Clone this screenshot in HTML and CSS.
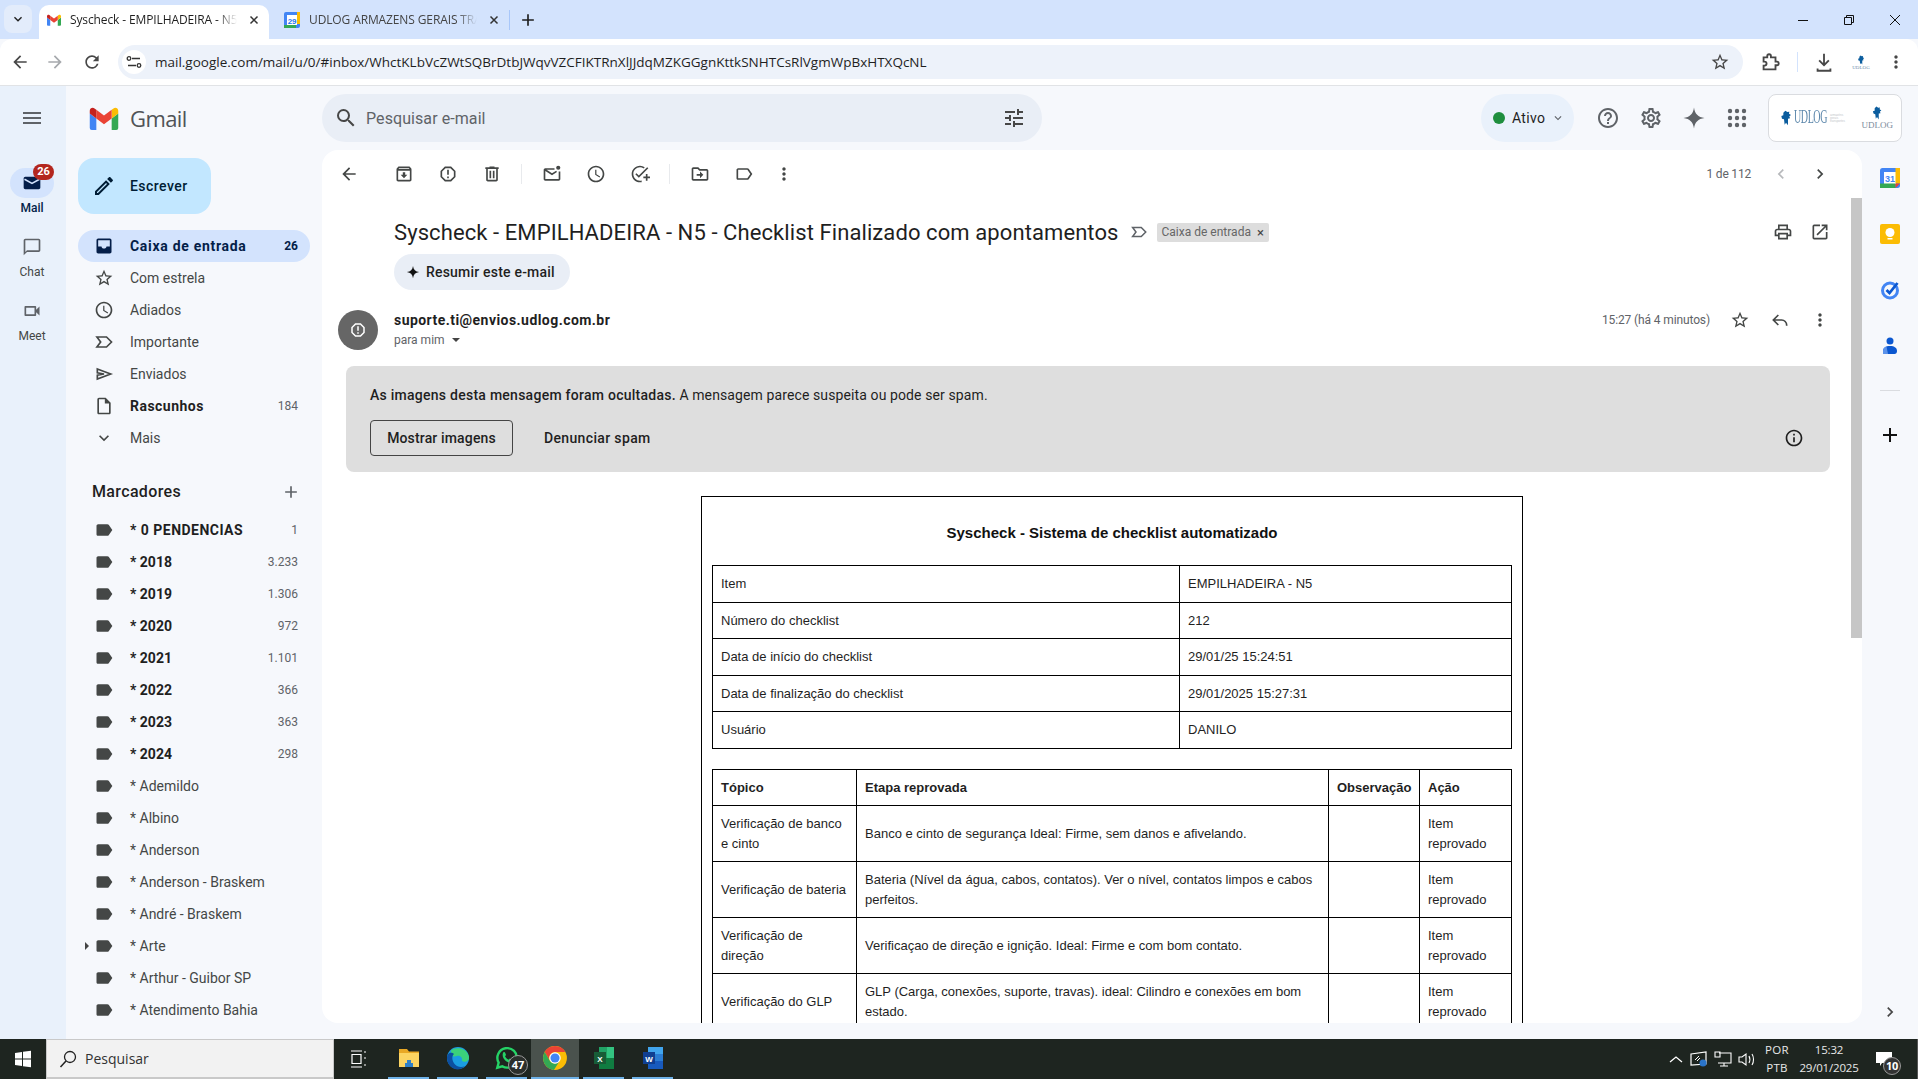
FILE: index.html
```html
<!DOCTYPE html>
<html lang="pt-BR">
<head>
<meta charset="utf-8">
<title>Syscheck - EMPILHADEIRA - N5</title>
<link rel="stylesheet" href="styles.css">
</head>
<body>
<svg class="defs" xmlns="http://www.w3.org/2000/svg">
<symbol id="back" viewBox="0 0 24 24"><path d="M20 11H7.83l5.59-5.59L12 4l-8 8 8 8 1.41-1.41L7.83 13H20v-2z"/></symbol>
<symbol id="forward" viewBox="0 0 24 24"><path d="M12 4l-1.41 1.41L16.17 11H4v2h12.17l-5.58 5.59L12 20l8-8z"/></symbol>
<symbol id="refresh" viewBox="0 0 24 24"><path d="M17.65 6.35A7.958 7.958 0 0 0 12 4c-4.42 0-7.99 3.58-7.99 8s3.57 8 7.99 8c3.73 0 6.84-2.55 7.73-6h-2.08A5.99 5.99 0 0 1 12 18c-3.31 0-6-2.69-6-6s2.69-6 6-6c1.66 0 3.14.69 4.22 1.78L13 11h7V4l-2.35 2.35z"/></symbol>
<symbol id="star" viewBox="0 0 24 24"><path d="M22 9.24l-7.19-.62L12 2 9.19 8.63 2 9.24l5.46 4.73L5.82 21 12 17.27 18.18 21l-1.63-7.03L22 9.24zM12 15.4l-3.76 2.27 1-4.28-3.32-2.88 4.38-.38L12 6.1l1.71 4.04 4.38.38-3.32 2.88 1 4.28L12 15.4z"/></symbol>
<symbol id="search" viewBox="0 0 24 24"><path d="M15.5 14h-.79l-.28-.27A6.471 6.471 0 0 0 16 9.5 6.5 6.5 0 1 0 9.5 16c1.61 0 3.09-.59 4.23-1.57l.27.28v.79l5 4.99L20.49 19l-4.99-5zm-6 0C7.01 14 5 11.99 5 9.5S7.01 5 9.5 5 14 7.01 14 9.5 11.99 14 9.5 14z"/></symbol>
<symbol id="menu" viewBox="0 0 24 24"><path d="M3 18h18v-2H3v2zm0-5h18v-2H3v2zm0-7v2h18V6H3z"/></symbol>
<symbol id="tune" viewBox="0 0 24 24"><path d="M3 17v2h6v-2H3zM3 5v2h10V5H3zm10 16v-2h8v-2h-8v-2h-2v6h2zM7 9v2H3v2h4v2h2V9H7zm14 4v-2H11v2h10zm-6-4h2V7h4V5h-4V3h-2v6z"/></symbol>
<symbol id="help" viewBox="0 0 24 24"><path d="M11 18h2v-2h-2v2zm1-16C6.48 2 2 6.48 2 12s4.48 10 10 10 10-4.48 10-10S17.52 2 12 2zm0 18c-4.41 0-8-3.59-8-8s3.59-8 8-8 8 3.59 8 8-3.59 8-8 8zm0-14c-2.21 0-4 1.79-4 4h2c0-1.1.9-2 2-2s2 .9 2 2c0 2-3 1.75-3 5h2c0-2.25 3-2.5 3-5 0-2.21-1.79-4-4-4z"/></symbol>
<symbol id="gear" viewBox="0 0 24 24"><path d="M19.43 12.98c.04-.32.07-.64.07-.98 0-.34-.03-.66-.07-.98l2.11-1.65c.19-.15.24-.42.12-.64l-2-3.46c-.09-.16-.26-.25-.44-.25-.06 0-.12.01-.17.03l-2.49 1c-.52-.4-1.08-.73-1.69-.98l-.38-2.65C14.46 2.18 14.25 2 14 2h-4c-.25 0-.46.18-.49.42l-.38 2.65c-.61.25-1.17.59-1.69.98l-2.49-1c-.06-.02-.12-.03-.18-.03-.17 0-.34.09-.43.25l-2 3.46c-.13.22-.07.49.12.64l2.11 1.65c-.04.32-.07.65-.07.98 0 .33.03.66.07.98l-2.11 1.65c-.19.15-.24.42-.12.64l2 3.46c.09.16.26.25.44.25.06 0 .12-.01.17-.03l2.49-1c.52.4 1.08.73 1.69.98l.38 2.65c.03.24.24.42.49.42h4c.25 0 .46-.18.49-.42l.38-2.65c.61-.25 1.17-.59 1.69-.98l2.49 1c.06.02.12.03.18.03.17 0 .34-.09.43-.25l2-3.46c.12-.22.07-.49-.12-.64l-2.11-1.65zm-1.98-1.71c.04.31.05.52.05.73 0 .21-.02.43-.05.73l-.14 1.13.89.7 1.08.84-.7 1.21-1.27-.51-1.04-.42-.9.68c-.43.32-.84.56-1.25.73l-1.06.43-.16 1.13-.2 1.35h-1.4l-.19-1.35-.16-1.13-1.06-.43c-.43-.18-.83-.41-1.23-.71l-.91-.7-1.06.43-1.27.51-.7-1.21 1.08-.84.89-.7-.14-1.13c-.03-.31-.05-.54-.05-.74s.02-.43.05-.73l.14-1.13-.89-.7-1.08-.84.7-1.21 1.27.51 1.04.42.9-.68c.43-.32.84-.56 1.25-.73l1.06-.43.16-1.13.2-1.35h1.39l.19 1.35.16 1.13 1.06.43c.43.18.83.41 1.23.71l.91.7 1.06-.43 1.27-.51.7 1.21-1.07.85-.89.7.14 1.13zM12 8c-2.21 0-4 1.79-4 4s1.79 4 4 4 4-1.79 4-4-1.79-4-4-4zm0 6c-1.1 0-2-.9-2-2s.9-2 2-2 2 .9 2 2-.9 2-2 2z"/></symbol>
<symbol id="spark" viewBox="0 0 24 24"><path d="M12 1.5C12.8 7.8 16.2 11.2 22.5 12 16.2 12.8 12.8 16.2 12 22.5 11.2 16.2 7.8 12.8 1.5 12 7.8 11.2 11.2 7.8 12 1.5z"/></symbol>
<symbol id="apps" viewBox="0 0 24 24"><circle cx="5" cy="5" r="2.2"/><circle cx="12" cy="5" r="2.2"/><circle cx="19" cy="5" r="2.2"/><circle cx="5" cy="12" r="2.2"/><circle cx="12" cy="12" r="2.2"/><circle cx="19" cy="12" r="2.2"/><circle cx="5" cy="19" r="2.2"/><circle cx="12" cy="19" r="2.2"/><circle cx="19" cy="19" r="2.2"/></symbol>
<symbol id="archive" viewBox="0 0 24 24"><path d="M20.54 5.23l-1.39-1.68C18.88 3.21 18.47 3 18 3H6c-.47 0-.88.21-1.16.55L3.46 5.23C3.17 5.57 3 6.02 3 6.5V19c0 1.1.9 2 2 2h14c1.1 0 2-.9 2-2V6.5c0-.48-.17-.93-.46-1.27zM6.24 5h11.52l.81.97H5.44l.8-.97zM5 19V8h14v11H5zm8.45-9h-2.9v3H8l4 4 4-4h-2.55z"/></symbol>
<symbol id="report" viewBox="0 0 24 24"><path d="M15.73 3H8.27L3 8.27v7.46L8.27 21h7.46L21 15.73V8.27L15.73 3zM19 14.9L14.9 19H9.1L5 14.9V9.1L9.1 5h5.8L19 9.1v5.8zM11 7h2v6h-2zm0 8h2v2h-2z"/></symbol>
<symbol id="trash" viewBox="0 0 24 24"><path d="M15 4V3H9v1H4v2h1v13c0 1.1.9 2 2 2h10c1.1 0 2-.9 2-2V6h1V4h-5zm2 15H7V6h10v13zM9 8h2v9H9zm4 0h2v9h-2z"/></symbol>
<symbol id="unread" viewBox="0 0 24 24"><path d="M15 5H4c-1.1 0-2 .9-2 2v11c0 1.1.9 2 2 2h16c1.1 0 2-.9 2-2V9h-2v9H4V8.500l8 5 6-3.800-1-1.700-5 3.100L5.500 7H15z"/><circle cx="19.500" cy="4.500" r="2.500"/></symbol>
<symbol id="clock" viewBox="0 0 24 24"><path d="M11.99 2C6.47 2 2 6.48 2 12s4.47 10 9.99 10C17.52 22 22 17.52 22 12S17.52 2 11.99 2zM12 20c-4.42 0-8-3.58-8-8s3.58-8 8-8 8 3.58 8 8-3.58 8-8 8zm.5-13H11v6l5.25 3.15.75-1.23-4.5-2.67z"/></symbol>
<symbol id="addtask" viewBox="0 0 24 24"><path d="M22 5.18L10.59 16.6l-4.24-4.24 1.41-1.41 2.83 2.83 10-10L22 5.18zm-10 14.8c-4.42 0-8-3.56-8-7.98s3.58-8 8-8c1.58 0 3.04.46 4.28 1.25l1.44-1.44A9.9 9.9 0 0 0 12 2C6.48 2 2 6.48 2 12s4.48 10 10 10c.7 0 1.3-.05 2-.2v-2.05c-.65.15-1.3.23-2 .23zM19 15h-3v2h3v3h2v-3h3v-2h-3v-3h-2v3z"/></symbol>
<symbol id="move" viewBox="0 0 24 24"><path d="M20 6h-8l-2-2H4c-1.1 0-1.99.9-1.99 2L2 18c0 1.1.9 2 2 2h16c1.1 0 2-.9 2-2V8c0-1.1-.9-2-2-2zm0 12H4V6h5.17l2 2H20v10zm-8-4H8v-2h4V9l4 4-4 4v-3z"/></symbol>
<symbol id="label" viewBox="0 0 24 24"><path d="M17.63 5.84C17.27 5.33 16.67 5 16 5L5 5.01C3.9 5.01 3 5.9 3 7v10c0 1.1.9 1.99 2 1.99L16 19c.67 0 1.27-.33 1.63-.84L22 12l-4.37-6.16zM16 17H5V7h11l3.55 5L16 17z"/></symbol>
<symbol id="labelfill" viewBox="0 0 24 24"><path d="M17.63 5.84C17.27 5.33 16.67 5 16 5L5 5.01C3.9 5.01 3 5.9 3 7v10c0 1.1.9 1.99 2 1.99L16 19c.67 0 1.27-.33 1.63-.84L22 12l-4.37-6.16z"/></symbol>
<symbol id="more" viewBox="0 0 24 24"><path d="M12 8c1.1 0 2-.9 2-2s-.9-2-2-2-2 .9-2 2 .9 2 2 2zm0 2c-1.1 0-2 .9-2 2s.9 2 2 2 2-.9 2-2-.9-2-2-2zm0 6c-1.1 0-2 .9-2 2s.9 2 2 2 2-.9 2-2-.9-2-2-2z"/></symbol>
<symbol id="chevl" viewBox="0 0 24 24"><path d="M15.41 7.41L14 6l-6 6 6 6 1.41-1.41L10.83 12z"/></symbol>
<symbol id="chevr" viewBox="0 0 24 24"><path d="M10 6L8.59 7.41 13.17 12l-4.58 4.59L10 18l6-6z"/></symbol>
<symbol id="expand" viewBox="0 0 24 24"><path d="M16.59 8.59L12 13.17 7.41 8.59 6 10l6 6 6-6z"/></symbol>
<symbol id="print" viewBox="0 0 24 24"><path d="M19 8h-1V3H6v5H5c-1.66 0-3 1.34-3 3v6h4v4h12v-4h4v-6c0-1.66-1.34-3-3-3zM8 5h8v3H8V5zm8 12v2H8v-4h8v2zm2-2v-2H6v2H4v-4c0-.55.45-1 1-1h14c.55 0 1 .45 1 1v4h-2z"/></symbol>
<symbol id="open" viewBox="0 0 24 24"><path d="M19 19H5V5h7V3H5a2 2 0 0 0-2 2v14a2 2 0 0 0 2 2h14c1.1 0 2-.9 2-2v-7h-2v7zM14 3v2h3.59l-9.83 9.83 1.41 1.41L19 6.41V10h2V3h-7z"/></symbol>
<symbol id="reply" viewBox="0 0 24 24"><path fill="none" stroke="currentColor" stroke-width="2" d="M10 6l-6 6 6 6M4 12h10a6 6 0 0 1 6 6v1"/></symbol>
<symbol id="info" viewBox="0 0 24 24"><path d="M11 7h2v2h-2zm0 4h2v6h-2zm1-9C6.48 2 2 6.48 2 12s4.48 10 10 10 10-4.48 10-10S17.52 2 12 2zm0 18c-4.41 0-8-3.59-8-8s3.59-8 8-8 8 3.59 8 8-3.59 8-8 8z"/></symbol>
<symbol id="inbox" viewBox="0 0 24 24"><path fill-rule="evenodd" d="M19 3H5c-1.1 0-2 .9-2 2v14c0 1.1.9 2 2 2h14c1.1 0 2-.9 2-2V5c0-1.1-.9-2-2-2zM12 15c-1.66 0-3-1-3-2.5H5V5h14v7.5h-4c0 1.5-1.34 2.5-3 2.5z"/></symbol>
<symbol id="important" viewBox="0 0 24 24"><path fill="none" stroke="currentColor" stroke-width="2" d="M3.5 6l4.5 6-4.500 6H15l6-6-6-6z"/></symbol>
<symbol id="send" viewBox="0 0 24 24"><path fill="none" stroke="currentColor" stroke-width="2" d="M4 6l16 6-16 6v-4.500l8-1.500-8-1.500z"/></symbol>
<symbol id="draft" viewBox="0 0 24 24"><path d="M14 2H6a2 2 0 0 0-2 2v16c0 1.100.9 2 2 2h12c1.100 0 2-.9 2-2V8l-6-6zm4 18H6V4h7v5h5v11z"/></symbol>
<symbol id="pencil" viewBox="0 0 24 24"><path d="M3 17.250V21h3.750L17.810 9.940l-3.750-3.750L3 17.250zM5.920 19H5v-.92l9.060-9.060.92.92L5.920 19zM20.710 5.630l-2.340-2.340c-.39-.39-1.020-.39-1.410 0l-1.830 1.830 3.750 3.750 1.830-1.830c.39-.39.39-1.020 0-1.410z"/></symbol>
<symbol id="chat" viewBox="0 0 24 24"><path d="M20 2H4c-1.100 0-2 .9-2 2v18l4-4h14c1.100 0 2-.9 2-2V4c0-1.100-.9-2-2-2zm0 14H6l-2 2V4h16v12z"/></symbol>
<symbol id="meet" viewBox="0 0 24 24"><path d="M15 8v8H5V8h10m1-2H4c-.55 0-1 .45-1 1v10c0 .55.45 1 1 1h12c.55 0 1-.45 1-1v-3.500l4 4v-11l-4 4V7c0-.55-.45-1-1-1z"/></symbol>
<symbol id="plus" viewBox="0 0 24 24"><path d="M19 13h-6v6h-2v-6H5v-2h6V5h2v6h6v2z"/></symbol>
<symbol id="gmail" viewBox="0 0 52 42"><path fill="#4285f4" d="M3.600 42H12V21L0 12v26.400A3.600 3.600 0 0 0 3.600 42z"/><path fill="#34a853" d="M40 42h8.400a3.600 3.600 0 0 0 3.600-3.600V12L40 21z"/><path fill="#fbbc04" d="M40 5v16l12-9V7c0-4.500-5.100-7-8.700-4.300z"/><path fill="#ea4335" d="M12 21V5l14 10.500L40 5v16L26 31.500z"/><path fill="#c5221f" d="M0 7v5l12 9V5L8.700 2.700C5.100 0 0 2.500 0 7z"/></symbol>
<symbol id="lion" viewBox="0 0 24 24"><path fill="#0b5d9e" d="M11 1l3 2 3-.5-.5 3 3 2-2.500 2 1 3-3 .5L15 23l-3-4-2 3-1-8-3-1-1-4 3-1V4z"/></symbol>
</svg>

<header class="tabstrip">
  <button class="tabdrop"><svg class="i i16 ink"><use href="#expand"/></svg></button>
  <div class="tab active">
    <svg class="i i14"><use href="#gmail"/></svg>
    <span class="tabtext">Syscheck - EMPILHADEIRA - N5</span>
    <svg class="i i16 ink"><path d="M4.500 4.500l7 7m0-7l-7 7" stroke="#333" stroke-width="1.500"/></svg>
  </div>
  <div class="tab">
    <svg class="cal-fav" viewBox="0 0 16 16"><rect width="16" height="16" rx="2" fill="#4285f4"/><rect x="3" y="3" width="10" height="10" fill="#fff"/><rect y="13" width="12" height="3" fill="#34a853"/><rect x="13" width="3" height="12" fill="#fbbc04"/><text x="8" y="11.500" class="cal-num">29</text></svg>
    <span class="tabtext tabtext-2">UDLOG ARMAZENS GERAIS TRA</span>
    <svg class="i i16 ink"><path d="M4.500 4.500l7 7m0-7l-7 7" stroke="#333" stroke-width="1.500"/></svg>
  </div>
  <span class="tabsep"></span>
  <svg class="i i20 ink newtab"><use href="#plus"/></svg>
  <div class="winctl">
    <svg class="i i16"><path d="M3 8.500h10" stroke="#111" stroke-width="1"/></svg>
    <svg class="i i16"><path d="M3.500 5.500h7v7h-7zM5.500 5.500v-2h7v7h-2" fill="none" stroke="#111" stroke-width="1"/></svg>
    <svg class="i i16"><path d="M3 3l10 10m0-10L3 13" stroke="#111" stroke-width="1"/></svg>
  </div>
</header>

<nav class="toolbar">
  <svg class="i i20 dark navb"><use href="#back"/></svg>
  <svg class="i i20 faint navb"><use href="#forward"/></svg>
  <svg class="i i20 dark navb"><use href="#refresh"/></svg>
  <div class="omnibox">
    <span class="siteinfo"><svg class="i i16" viewBox="0 0 16 16"><path d="M6 4.500h8M2 11.500h8" stroke="#333" stroke-width="1.300" fill="none"/><circle cx="3" cy="4.500" r="1.800" fill="none" stroke="#333" stroke-width="1.300"/><circle cx="13" cy="11.500" r="1.800" fill="none" stroke="#333" stroke-width="1.300"/></svg></span>
    <span class="url">mail.google.com/mail/u/0/#inbox/WhctKLbVcZWtSQBrDtbJWqvVZCFIKTRnXlJJdqMZKGGgnKttkSNHTCsRlVgmWpBxHTXQcNL</span>
    <svg class="i i20 dark omnistar"><use href="#star"/></svg>
  </div>
  <svg class="tb-ext dark" viewBox="0 0 24 24"><path fill="none" stroke="currentColor" stroke-width="2" d="M5 7h4V5.500a2 2 0 0 1 4 0V7h5v4.500h1.500a2 2 0 0 1 0 4H18V20H5v-4h1a2 2 0 0 0 0-4.500H5z"/></svg>
  <span class="tb-sep"></span>
  <svg class="i i22 dark tb-dl" viewBox="0 0 24 24"><path fill="currentColor" d="M11 3h2v10.200l3.600-3.600L18 11l-6 6-6-6 1.400-1.400L11 13.200zM4 19h2v1.500h12V19h2v3.500H4z"/></svg>
  <span class="tb-avatar"><svg class="i i10"><use href="#lion"/></svg><span class="tiny-log">UDLOG</span></span>
  <svg class="i i20 dark tb-more"><use href="#more"/></svg>
</nav>

<div class="app">
  <aside class="rail">
    <div class="hamb"><svg class="i i24 gray"><use href="#menu"/></svg></div>
    <div class="railitem">
      <span class="pill sel"><svg class="i i20 navy" viewBox="0 0 24 24"><path d="M4 4.500h16c1.100 0 2 .9 2 2v11c0 1.100-.9 2-2 2H4c-1.100 0-2-.9-2-2v-11c0-1.100.9-2 2-2z"/><path d="M3 7.500l9 5 9-5" fill="none" stroke="#d3e3fd" stroke-width="1.800"/></svg><b class="badge">26</b></span>
      <span class="raillabel strong">Mail</span>
    </div>
    <div class="railitem">
      <span class="pill"><svg class="i i20 gray"><use href="#chat"/></svg></span>
      <span class="raillabel">Chat</span>
    </div>
    <div class="railitem">
      <span class="pill"><svg class="i i20 gray"><use href="#meet"/></svg></span>
      <span class="raillabel">Meet</span>
    </div>
  </aside>

  <div class="brand">
    <svg class="gm-logo"><use href="#gmail"/></svg>
    <span class="gm-word">Gmail</span>
  </div>

  <div class="topbar">
    <div class="searchbox">
      <svg class="i i24 dark"><use href="#search"/></svg>
      <span class="searchtext">Pesquisar e-mail</span>
      <svg class="i i24 dark tune"><use href="#tune"/></svg>
    </div>
    <div class="status"><span class="dot"></span>Ativo<svg class="i i14 gray"><use href="#expand"/></svg></div>
    <svg class="i i24 gray topic t-help"><use href="#help"/></svg>
    <svg class="i i24 gray topic"><use href="#gear"/></svg>
    <svg class="i i24 gray topic"><use href="#spark"/></svg>
    <svg class="i i24 gray topic"><use href="#apps"/></svg>
    <div class="orgbox">
      <svg class="org-l"><use href="#lion"/></svg><span class="org-t">UDLOG</span><span class="org-f">armazéns gerais transportes</span>
      <span class="org-r"><svg class="i i14"><use href="#lion"/></svg><span class="org-t2">UDLOG</span></span>
    </div>
  </div>

  <aside class="side">
    <button class="compose"><svg class="i i24 navyk"><use href="#pencil"/></svg><span>Escrever</span></button>
    <ul class="nav">
      <li class="row current"><svg class="i i20"><use href="#inbox"/></svg><span class="nm">Caixa de entrada</span><span class="ct">26</span></li>
      <li class="row"><svg class="i i20"><use href="#star"/></svg><span class="nm">Com estrela</span></li>
      <li class="row"><svg class="i i20"><use href="#clock"/></svg><span class="nm">Adiados</span></li>
      <li class="row"><svg class="i i20"><use href="#important"/></svg><span class="nm">Importante</span></li>
      <li class="row"><svg class="i i20"><use href="#send"/></svg><span class="nm">Enviados</span></li>
      <li class="row bold"><svg class="i i20"><use href="#draft"/></svg><span class="nm">Rascunhos</span><span class="ct">184</span></li>
      <li class="row"><svg class="i i20"><use href="#expand"/></svg><span class="nm">Mais</span></li>
    </ul>
    <div class="markhead"><span>Marcadores</span><svg class="i i20 gray"><use href="#plus"/></svg></div>
    <ul class="nav labels">
      <li class="row bold"><svg class="i i20"><use href="#labelfill"/></svg><span class="nm">* 0 PENDENCIAS</span><span class="ct">1</span></li>
      <li class="row bold yr"><svg class="i i20"><use href="#labelfill"/></svg><span class="nm">* 2018</span><span class="ct">3.233</span></li>
      <li class="row bold yr"><svg class="i i20"><use href="#labelfill"/></svg><span class="nm">* 2019</span><span class="ct">1.306</span></li>
      <li class="row bold yr"><svg class="i i20"><use href="#labelfill"/></svg><span class="nm">* 2020</span><span class="ct">972</span></li>
      <li class="row bold yr"><svg class="i i20"><use href="#labelfill"/></svg><span class="nm">* 2021</span><span class="ct">1.101</span></li>
      <li class="row bold yr"><svg class="i i20"><use href="#labelfill"/></svg><span class="nm">* 2022</span><span class="ct">366</span></li>
      <li class="row bold yr"><svg class="i i20"><use href="#labelfill"/></svg><span class="nm">* 2023</span><span class="ct">363</span></li>
      <li class="row bold yr"><svg class="i i20"><use href="#labelfill"/></svg><span class="nm">* 2024</span><span class="ct">298</span></li>
      <li class="row"><svg class="i i20"><use href="#labelfill"/></svg><span class="nm">* Ademildo</span></li>
      <li class="row"><svg class="i i20"><use href="#labelfill"/></svg><span class="nm">* Albino</span></li>
      <li class="row"><svg class="i i20"><use href="#labelfill"/></svg><span class="nm">* Anderson</span></li>
      <li class="row"><svg class="i i20"><use href="#labelfill"/></svg><span class="nm">* Anderson - Braskem</span></li>
      <li class="row"><svg class="i i20"><use href="#labelfill"/></svg><span class="nm">* André - Braskem</span></li>
      <li class="row caret"><svg class="i i20"><use href="#labelfill"/></svg><span class="nm">* Arte</span></li>
      <li class="row"><svg class="i i20"><use href="#labelfill"/></svg><span class="nm">* Arthur - Guibor SP</span></li>
      <li class="row"><svg class="i i20"><use href="#labelfill"/></svg><span class="nm">* Atendimento Bahia</span></li>
    </ul>
  </aside>

  <main class="card">
    <div class="actions">
      <button class="ab"><svg class="i i20"><use href="#back"/></svg></button>
      <button class="ab first"><svg class="i i20"><use href="#archive"/></svg></button>
      <button class="ab"><svg class="i i20"><use href="#report"/></svg></button>
      <button class="ab"><svg class="i i20"><use href="#trash"/></svg></button>
      <span class="vsep"></span>
      <button class="ab"><svg class="i i20"><use href="#unread"/></svg></button>
      <button class="ab"><svg class="i i20"><use href="#clock"/></svg></button>
      <button class="ab"><svg class="i i20"><use href="#addtask"/></svg></button>
      <span class="vsep"></span>
      <button class="ab"><svg class="i i20"><use href="#move"/></svg></button>
      <button class="ab"><svg class="i i20"><use href="#label"/></svg></button>
      <button class="ab last"><svg class="i i20"><use href="#more"/></svg></button>
      <span class="pager">1 de 112</span>
      <button class="pg off"><svg class="i i20"><use href="#chevl"/></svg></button>
      <button class="pg"><svg class="i i20"><use href="#chevr"/></svg></button>
    </div>

    <div class="subjectrow">
      <h1 class="subject">Syscheck - EMPILHADEIRA - N5 - Checklist Finalizado com apontamentos</h1>
      <svg class="i i18 marker"><use href="#important"/></svg>
      <span class="chip">Caixa de entrada<span class="chipx">×</span></span>
      <svg class="i i20 subj-ic first"><use href="#print"/></svg>
      <svg class="i i20 subj-ic"><use href="#open"/></svg>
    </div>

    <button class="summ"><svg class="i i14 blk"><use href="#spark"/></svg>Resumir este e-mail</button>

    <div class="msghead">
      <span class="avatar"><svg class="i i18 wht"><use href="#report"/></svg></span>
      <div class="who">
        <div class="sender">suporte.ti@envios.udlog.com.br</div>
        <div class="tome">para mim <i class="tri"></i></div>
      </div>
      <span class="when">15:27 (há 4 minutos)</span>
      <button class="mb"><svg class="i i20"><use href="#star"/></svg></button>
      <button class="mb"><svg class="i i20"><use href="#reply"/></svg></button>
      <button class="mb"><svg class="i i20"><use href="#more"/></svg></button>
    </div>

    <section class="warn">
      <p class="warntext"><span class="w5">As imagens desta mensagem foram ocultadas.</span> <span class="w4">A mensagem parece suspeita ou pode ser spam.</span></p>
      <div class="warnbtns">
        <button class="bshow">Mostrar imagens</button>
        <button class="bspam">Denunciar spam</button>
        <svg class="i i20 warninfo"><use href="#info"/></svg>
      </div>
    </section>

    <article class="mailbox">
      <h2 class="mailtitle">Syscheck - Sistema de checklist automatizado</h2>
      <table class="t t1">
        <colgroup><col class="c1a"><col></colgroup>
        <tr><td>Item</td><td>EMPILHADEIRA - N5</td></tr>
        <tr><td>Número do checklist</td><td>212</td></tr>
        <tr><td>Data de início do checklist</td><td>29/01/25 15:24:51</td></tr>
        <tr><td>Data de finalização do checklist</td><td>29/01/2025 15:27:31</td></tr>
        <tr><td>Usuário</td><td>DANILO</td></tr>
      </table>
      <table class="t t2">
        <colgroup><col class="c2a"><col><col class="c2c"><col class="c2d"></colgroup>
        <tr><th>Tópico</th><th>Etapa reprovada</th><th>Observação</th><th>Ação</th></tr>
        <tr><td>Verificação de banco e cinto</td><td>Banco e cinto de segurança Ideal: Firme, sem danos e afivelando.</td><td></td><td>Item reprovado</td></tr>
        <tr><td>Verificação de bateria</td><td>Bateria (Nível da água, cabos, contatos). Ver o nível, contatos limpos e cabos perfeitos.</td><td></td><td>Item reprovado</td></tr>
        <tr><td>Verificação de direção</td><td>Verificaçao de direção e ignição. Ideal: Firme e com bom contato.</td><td></td><td>Item reprovado</td></tr>
        <tr><td>Verificação do GLP</td><td>GLP (Carga, conexões, suporte, travas). ideal: Cilindro e conexões em bom estado.</td><td></td><td>Item reprovado</td></tr>
      </table>
    </article>
    <span class="thumb"></span>
  </main>

  <aside class="addons">
    <svg class="ad" viewBox="0 0 20 20"><rect width="20" height="20" rx="2.500" fill="#4285f4"/><rect x="4" y="4" width="12" height="12" fill="#fff"/><rect y="15.500" width="15.500" height="4.500" fill="#34a853"/><rect x="15.500" y="0" width="4.500" height="15.500" fill="#fbbc04"/><path d="M15.500 15.500H20L15.500 20z" fill="#ea4335"/><text x="10" y="14" class="cal-num2">31</text></svg>
    <svg class="ad" viewBox="0 0 20 20"><rect width="20" height="20" rx="2" fill="#fbbc04"/><circle cx="10" cy="8.500" r="4.500" fill="#fff"/><rect x="7.500" y="14" width="5" height="1.500" fill="#fff"/></svg>
    <svg class="ad" viewBox="0 0 20 20"><circle cx="10" cy="10.500" r="7.500" fill="none" stroke="#4285f4" stroke-width="3"/><path d="M6.500 10l3 3L17.500 3" fill="none" stroke="#0b57d0" stroke-width="2.800"/></svg>
    <svg class="ad" viewBox="0 0 20 20"><circle cx="10" cy="5" r="3.500" fill="#0b57d0"/><path d="M3 18v-3c0-3 2.500-5 7-5s7 2 7 5c0 2-1 3-2.500 3z" fill="#0b57d0"/><path d="M3 18v-3c0-2.500 1.500-4 3.500-4.500L8 18z" fill="#5b92ea"/></svg>
    <span class="adsep"></span>
    <svg class="i i24 blk adplus"><use href="#plus"/></svg>
    <svg class="i i20 dark adchev"><use href="#chevr"/></svg>
  </aside>
</div>

<footer class="taskbar">
  <span class="start"><svg class="i i18" viewBox="0 0 18 18"><path fill="#fff" d="M1 3l7-1v6.500H1zM9 1.800L17 .8v7.700H9zM1 9.500h7V16l-7-1zM9 9.500h8v7.700l-8-1z"/></svg></span>
  <div class="tasksearch"><svg class="i i20 sblk" viewBox="0 0 20 20"><circle cx="12" cy="8" r="5.500" fill="none" stroke="#222" stroke-width="1.300"/><path d="M8 12l-5.500 6" stroke="#222" stroke-width="1.500"/></svg><span>Pesquisar</span></div>
  <span class="taskview"><svg class="i i18" viewBox="0 0 18 18"><path fill="none" stroke="#fff" stroke-width="1.200" d="M2 1h11M2 17h11M3 4.500h9v9H3zM15 2h2M15 8h2M15 15h2"/></svg></span>
  <div class="app-ic"><svg class="i i24" viewBox="0 0 24 24"><path fill="#e9a825" d="M2 3h8l2 2.500h10V8H2z"/><path fill="#fcd462" d="M2 7h20v14H2z"/><path fill="#2f80c9" d="M8 17h8v4H8zM10 14h4v3h-4z"/></svg></div>
  <div class="app-ic"><svg class="i i24" viewBox="0 0 24 24"><circle cx="12" cy="12" r="11" fill="#1b9de2"/><path fill="#3bd17b" d="M5 4.500C9 .5 21 1 23 11c.5 4-4 6-7 4 1-3-2-6-5-5-3.500 1-6 1-6-5.500z"/><path fill="#0c4fa0" d="M1 12C1 6 6 6 8 8 5 10 6 17 11 20c3 1.500 6 1 8 0-3 3-7 4-10 3C4 21.500 1 17 1 12z"/></svg></div>
  <div class="app-ic wa"><svg class="i i26" viewBox="0 0 24 24"><path fill="none" stroke="#25d366" stroke-width="2.200" d="M3 21l1.300-4.700A9 9 0 1 1 7.700 19.700z"/><path fill="#25d366" d="M8.500 7c1-.8 1.500-.5 2 .7l.6 1.500-.9 1.200c.6 1.300 1.700 2.400 3.200 3.100l1.200-1 2 1c.5.400.4 1.200-.2 1.900-1 1-3 1-5.200-.4C9 13.500 7 10 8.500 7z"/></svg><b class="wabadge">47</b></div>
  <div class="app-ic on"><svg class="i i26" viewBox="0 0 24 24"><circle cx="12" cy="12" r="11" fill="#fbbc04"/><path fill="#ea4335" d="M12 1a11 11 0 0 0-9.500 5.500l4.700 8A5.500 5.500 0 0 1 12 6.500h9.500A11 11 0 0 0 12 1z"/><path fill="#34a853" d="M2.500 6.500A11 11 0 0 0 11 23l4.800-7.500a5.500 5.500 0 0 1-8.600-1z"/><circle cx="12" cy="12" r="5.300" fill="#fff"/><circle cx="12" cy="12" r="4.200" fill="#4285f4"/></svg></div>
  <div class="app-ic"><svg class="i i24" viewBox="0 0 24 24"><path fill="#21a366" d="M7 1h15v22H7z"/><path fill="#107c41" d="M7 12h15v11H7z"/><path fill="#33c481" d="M15 1h7v11h-7z"/><rect x="2" y="6" width="12" height="12" fill="#185c37"/><text x="8" y="16" class="tile">X</text></svg></div>
  <div class="app-ic"><svg class="i i24" viewBox="0 0 24 24"><path fill="#2b7cd3" d="M7 1h15v22H7z"/><path fill="#41a5ee" d="M7 1h15v7H7z"/><path fill="#185abd" d="M7 15h15v8H7z"/><rect x="2" y="6" width="12" height="12" fill="#103f91"/><text x="8" y="16" class="tile">W</text></svg></div>
  <div class="tray">
    <svg class="i i16" viewBox="0 0 16 16"><path d="M2 11l6-5 6 5" fill="none" stroke="#fff" stroke-width="1.300"/></svg>
    <svg class="i i18 traytr" viewBox="0 0 18 18"><path d="M1 4l15-2v12l-15 1z" fill="none" stroke="#fff" stroke-width="1.200"/><path d="M5 10l4-4M7 11l3-3" stroke="#fff"/><circle cx="13" cy="13" r="3.500" fill="#2a74c9"/></svg>
    <svg class="i i18 traytr" viewBox="0 0 18 18"><path d="M5 3h12v10H4M10 13v3M6 16h8M1 2h5v5H1z" fill="none" stroke="#fff" stroke-width="1.100"/></svg>
    <svg class="i i18 traytr" viewBox="0 0 18 18"><path d="M1 7h3l4-3v11l-4-3H1zM11 6c1 2 1 5 0 7M14 4c2 3 2 8 0 11" fill="none" stroke="#fff" stroke-width="1.100"/></svg>
    <div class="lang"><span>POR</span><span>PTB</span></div>
    <div class="clock"><span>15:32</span><span>29/01/2025</span></div>
    <div class="notif"><svg class="i i16" viewBox="0 0 16 16"><path fill="#fff" d="M0 1h16v11H6l-2 3v-3H0z"/></svg><b class="nbadge">10</b></div>
  </div>
</footer>
</body>
</html>
```

FILE: styles.css
```css
* { box-sizing: border-box; }
html, body { margin: 0; padding: 0; width: 1918px; height: 1079px; overflow: hidden; }
body { font-family: Roboto, "Liberation Sans", sans-serif; color: #1f1f1f; display: flex; flex-direction: column; background: #f6f8fc; }
ul { list-style: none; margin: 0; padding: 0; }
button { font: inherit; border: 0; background: none; padding: 0; color: inherit; }
.defs { display: none; }
.i { display: block; flex: none; fill: currentColor; }
.i10 { width: 10px; height: 10px; }
.i14 { width: 14px; height: 14px; }
.i16 { width: 16px; height: 16px; }
.i18 { width: 18px; height: 18px; }
.i20 { width: 20px; height: 20px; }
.i22 { width: 22px; height: 22px; }
.i24 { width: 24px; height: 24px; }
.i26 { width: 26px; height: 26px; }
.ink { color: #1f1f1f; }
.dark { color: #474747; }
.faint { color: #a6a9ad; }
.gray { color: #5f6368; }
.navy { color: #041e49; }
.navyk { color: #001d35; }
.blk { color: #111; }
.wht { color: #fff; }

/* browser chrome */
.tabstrip { height: 39px; flex: none; background: #d3e3fd; display: flex; align-items: flex-end; padding-left: 4px; }
.tabdrop { width: 28px; height: 28px; margin: 0 7px 6px 0; background: #e3ecfb; border-radius: 8px; display: flex; align-items: center; justify-content: center; }
.tab { width: 230px; height: 34px; padding: 0 7px 5px 8px; display: flex; align-items: center; gap: 9px; font: 12px "Open Sans", sans-serif; letter-spacing: -.12px; color: #444; }
.tab.active { background: #fff; border-radius: 10px 10px 0 0; color: #1f1f1f; padding-left: 8px; }
.tab + .tab { width: 240px; padding-left: 15px; }
.tabtext { flex: 1; min-width: 0; white-space: nowrap; overflow: hidden; -webkit-mask-image: linear-gradient(90deg, #000 88%, transparent); mask-image: linear-gradient(90deg, #000 88%, transparent); }
.tabtext-2 { color: #444; }
.cal-fav { width: 16px; height: 16px; flex: none; }
.cal-num { font: bold 8px "Liberation Sans", sans-serif; text-anchor: middle; fill: #1a73e8; }
.tabsep { width: 1px; height: 20px; background: #a8c7fa; margin: 0 8px 9px 0; }
.newtab { margin: 0 0 9px 0; }
.winctl { margin-left: auto; align-self: stretch; display: flex; align-items: center; gap: 30px; padding-right: 15px; }
.toolbar { height: 47px; flex: none; background: #fff; border-bottom: 1px solid #e1e3e6; border-radius: 12px 12px 0 0; display: flex; align-items: center; padding-left: 10px; }
.navb { margin-right: 15px; }
.navb + .navb { margin-right: 17px; }
.navb + .navb + .navb { margin-right: 16px; }
.omnibox { width: 1625px; height: 34px; background: #edf2fa; border-radius: 17px; display: flex; align-items: center; padding: 0 13px 0 4px; }
.siteinfo { width: 24px; height: 24px; border-radius: 50%; background: #fff; display: flex; align-items: center; justify-content: center; margin-right: 9px; }
.url { font: 13.500px "Open Sans", sans-serif; color: #1f1f1f; white-space: nowrap; }
.omnistar { margin-left: auto; }
.tb-ext { width: 22px; height: 22px; margin-left: 16px; }
.tb-sep { width: 1px; height: 20px; background: #d3e3fd; margin-left: 16px; }
.tb-dl { margin-left: 15px; }
.tb-avatar { width: 24px; margin-left: 14px; display: flex; flex-direction: column; align-items: center; }
.tiny-log { font: 5px "Liberation Serif", serif; color: #6d8fae; white-space: nowrap; }
.tb-more { margin-left: 13px; }

/* gmail shell */
.app { height: 953px; flex: none; display: grid; grid-template-columns: 66px 256px 1540px 56px; grid-template-rows: 64px 889px; background: #f6f8fc; }
.rail { grid-row: 1 / 3; background: #e9f1fb; display: flex; flex-direction: column; align-items: center; padding-right: 2px; }
.hamb { height: 82px; width: 100%; display: flex; justify-content: center; align-items: flex-start; padding-top: 20px; }
.railitem { height: 64px; display: flex; flex-direction: column; align-items: center; }
.pill { position: relative; width: 44px; height: 30px; border-radius: 15px; display: flex; align-items: center; justify-content: center; }
.pill.sel { background: #d3e3fd; }
.raillabel { margin-top: 1px; font-size: 12px; line-height: 18px; color: #444746; }
.raillabel.strong { color: #041e49; font-weight: 500; }
.badge { position: absolute; left: 23px; top: -4px; width: 21px; height: 16px; border-radius: 8px; background: #b3261e; color: #fff; font: 700 11px/16px Roboto, sans-serif; text-align: center; }
.brand { display: flex; align-items: center; gap: 11px; padding: 0 0 0 23px; }
.gm-logo { width: 30px; height: 23px; }
.gm-word { font: 22px "Open Sans", sans-serif; color: #505357; letter-spacing: -.6px; }
.topbar { grid-column: 3 / 5; display: flex; align-items: center; }
.searchbox { width: 720px; height: 48px; background: #e9eef6; border-radius: 24px; display: flex; align-items: center; padding: 0 16px 0 12px; }
.searchtext { margin-left: 8px; font-size: 16px; letter-spacing: .08px; color: #5f6368; }
.tune { margin-left: auto; }
.status { width: 93px; height: 48px; margin-left: 439px; border-radius: 24px; background: #e9f1fb; display: flex; align-items: center; padding-left: 12px; gap: 7px; font-size: 14px; letter-spacing: .3px; color: #1f1f1f; }
.status .i { margin-left: -1px; }
.dot { width: 12px; height: 12px; border-radius: 50%; background: #1e8e3e; }
.topic { margin-left: 19px; }
.t-help { margin-left: 22px; }
.orgbox { width: 134px; height: 48px; margin-left: 19px; background: #fff; border: 1px solid #dadce0; border-radius: 8px; display: flex; align-items: center; padding-left: 9px; position: relative; }
.org-l { width: 16px; height: 24px; flex: none; }
.org-t { font: 10px/14px "Liberation Serif", serif; letter-spacing: -.4px; color: #5c87ab; white-space: nowrap; transform: scaleY(1.8); }
.org-f { width: 22px; margin-left: 3px; font: 3px/3px "Liberation Sans", sans-serif; color: #c3c6ca; }
.org-r { position: absolute; right: 8px; top: 11px; display: flex; flex-direction: column; align-items: center; }
.org-t2 { font: 9px/11px "Liberation Serif", serif; color: #7b8b9b; white-space: nowrap; }

/* sidebar */
.side { overflow: hidden; padding-left: 12px; }
.compose { margin-top: 8px; width: 133px; height: 56px; background: #c2e7ff; border-radius: 16px; display: flex; align-items: center; padding-left: 14px; gap: 14px; font-size: 14px; font-weight: 500; letter-spacing: .45px; color: #001d35; }
.nav { width: 232px; }
.compose + .nav { margin-top: 16px; }
.row { height: 32px; border-radius: 16px; display: flex; align-items: center; padding: 0 12px 0 16px; font-size: 14px; color: #444746; position: relative; }
.row .nm { margin-left: 16px; flex: 1; white-space: nowrap; }
.row .ct { font-size: 12px; color: #5f6368; }
.row.bold .nm { font-weight: 700; letter-spacing: .48px; color: #1f1f1f; }
.row.yr .nm { letter-spacing: 0; }
.row.current { background: #d3e3fd; color: #041e49; }
.row.current .nm { font-weight: 700; letter-spacing: .7px; color: #041e49; }
.row.current .ct { font-weight: 700; color: #041e49; }
.row.caret::before { content: ""; position: absolute; left: 7px; top: 12px; border-left: 4px solid #444; border-top: 4px solid transparent; border-bottom: 4px solid transparent; }
.labels .i { color: #444746; }
.markhead { width: 232px; height: 45px; margin-top: 15px; padding: 0 9px 0 14px; display: flex; align-items: center; justify-content: space-between; font-size: 16px; font-weight: 500; letter-spacing: .35px; color: #1f1f1f; }

/* conversation */
.card { position: relative; height: 873px; background: #fff; border-radius: 16px; overflow: hidden; }
.actions { height: 48px; display: flex; align-items: center; padding: 0 23px 0 5px; }
.ab { width: 44px; height: 40px; display: flex; align-items: center; justify-content: center; color: #444746; }
.ab.first { margin-left: 11px; }
.ab.last { margin-left: -4px; }
.vsep { width: 1px; height: 20px; background: #e8eaed; margin: 0 8px 0 7px; }
.pager { margin-left: auto; margin-right: 10px; font-size: 12px; letter-spacing: -.2px; color: #5f6368; }
.pg { width: 39px; height: 40px; display: flex; align-items: center; justify-content: center; color: #444746; }
.pg.off { color: #b7b9bc; }
.subjectrow { height: 36px; margin-top: 16px; padding: 0 32px 0 72px; display: flex; align-items: center; color: #444746; }
.subject { margin: 0; font-size: 22px; font-weight: 400; letter-spacing: .09px; color: #1f1f1f; white-space: nowrap; }
.marker { margin-left: 11px; color: #5f6368; }
.chip { margin-left: 9px; height: 19px; padding: 0 5px; background: #dddddd; border-radius: 2px; display: flex; align-items: center; font-size: 12px; color: #666; }
.chipx { margin-left: 6px; font-size: 13px; color: #444; }
.subj-ic { margin-left: 17px; }
.subj-ic.first { margin-left: auto; }
.summ { display: flex; align-items: center; gap: 6px; margin: 4px 0 0 72px; width: 176px; height: 36px; padding-left: 12px; border-radius: 18px; background: #e9eef6; font-size: 14px; font-weight: 500; letter-spacing: .2px; color: #1f1f1f; }
.msghead { height: 40px; margin-top: 20px; padding: 0 22px 0 16px; display: flex; align-items: flex-start; color: #444746; }
.avatar { width: 40px; height: 40px; border-radius: 50%; background: #666; display: flex; align-items: center; justify-content: center; }
.who { margin-left: 16px; }
.sender { font-size: 14px; line-height: 20px; font-weight: 700; letter-spacing: .45px; color: #1f1f1f; }
.tome { font-size: 12px; line-height: 20px; color: #5f6368; display: flex; align-items: center; gap: 7px; }
.tri { width: 0; height: 0; border-top: 4px solid #444; border-left: 4px solid transparent; border-right: 4px solid transparent; }
.when { margin-left: auto; margin-right: 10px; font-size: 12px; line-height: 20px; letter-spacing: -.12px; color: #5f6368; }
.mb { width: 40px; height: 20px; display: flex; align-items: center; justify-content: center; }
.warn { height: 106px; margin: 16px 32px 0 24px; background: #dedede; border-radius: 8px; padding: 19px 24px 0; color: #1f1f1f; }
.warntext { margin: 0; font-size: 14px; line-height: 20px; }
.w5 { font-weight: 500; letter-spacing: .26px; }
.w4 { letter-spacing: .11px; }
.warnbtns { display: flex; align-items: center; margin-top: 15px; }
.bshow { width: 143px; height: 36px; border: 1px solid #444; border-radius: 4px; font-size: 14px; font-weight: 500; letter-spacing: .15px; text-align: center; }
.bspam { margin-left: 31px; font-size: 14px; font-weight: 500; letter-spacing: .35px; }
.warninfo { margin-left: auto; margin-right: 2px; }
.mailbox { width: 822px; margin: 24px 0 0 379px; padding: 26px 10px 0; border: 1px solid #000; font-family: "Liberation Sans", Arial, sans-serif; font-size: 13px; color: #1f1f1f; }
.mailtitle { margin: 0 0 22px; font-size: 15px; line-height: 20px; font-weight: 700; text-align: center; color: #111; }
.t { width: 800px; table-layout: fixed; border-collapse: collapse; }
.t td, .t th { border: 1px solid #000; padding: 8px; line-height: 19.500px; font-size: 13px; font-weight: 400; text-align: left; vertical-align: middle; }
.t th { font-weight: 700; }
.t2 { margin-top: 20px; }
.c1a { width: 467px; }
.c2a { width: 144px; }
.c2c { width: 91px; }
.c2d { width: 92px; }
.thumb { position: absolute; right: 0; top: 48px; width: 11px; height: 440px; background: #c6c6c6; }

/* right add-ons */
.addons { position: relative; display: flex; flex-direction: column; align-items: center; padding-top: 18px; }
.ad { width: 20px; height: 20px; flex: none; margin-bottom: 36px; }
.adsep { width: 20px; height: 1px; background: #dadce0; margin: -2px 0 32px; }
.adplus { color: #111; }
.adchev { margin-top: 555px; }

/* windows taskbar */
.taskbar { height: 40px; flex: none; background: #1e2520; display: flex; align-items: stretch; color: #fff; }
.start { width: 46px; display: flex; align-items: center; justify-content: center; }
.tasksearch { width: 288px; background: #f2f2f2; border: 1px solid #c9c9c9; border-bottom-width: 2px; display: flex; align-items: center; gap: 7px; padding-left: 11px; font: 14px "Open Sans", sans-serif; color: #333; }
.taskview { width: 48px; display: flex; align-items: center; justify-content: center; margin-right: 2px; }
.app-ic { position: relative; width: 41px; margin: 0 4px; display: flex; align-items: center; justify-content: center; border-bottom: 2px solid #6fb2e8; }
.app-ic.on { width: 48px; margin: 0; background: #4a524d; }
.wabadge { position: absolute; right: -1px; bottom: 2px; width: 20px; height: 20px; border: 1px solid #999; border-radius: 50%; background: #2b2f2c; font: 700 11px/18px "Open Sans", sans-serif; color: #fff; text-align: center; }
.tile { font: bold 8px "Liberation Sans", sans-serif; fill: #fff; text-anchor: middle; }
.cal-num2 { font: bold 9px "Liberation Sans", sans-serif; fill: #4285f4; text-anchor: middle; }
.tray { margin-left: auto; display: flex; align-items: center; padding-right: 4px; border-right: 1px solid #555; font: 11.500px "Open Sans", sans-serif; letter-spacing: -.2px; color: #e8e8e8; }
.traytr { margin-left: 6px; }
.lang { width: 38px; margin-left: 2px; display: flex; flex-direction: column; align-items: center; line-height: 18px; letter-spacing: .3px; }
.clock { width: 64px; margin-left: 1px; display: flex; flex-direction: column; align-items: center; line-height: 18px; }
.notif { position: relative; width: 52px; display: flex; justify-content: flex-start; padding-left: 15px; }
.nbadge { position: absolute; left: 22px; top: 6px; width: 18px; height: 18px; border: 1px solid #999; border-radius: 50%; background: #333; font: 700 11px/16px "Open Sans", sans-serif; text-align: center; color: #fff; }
```
